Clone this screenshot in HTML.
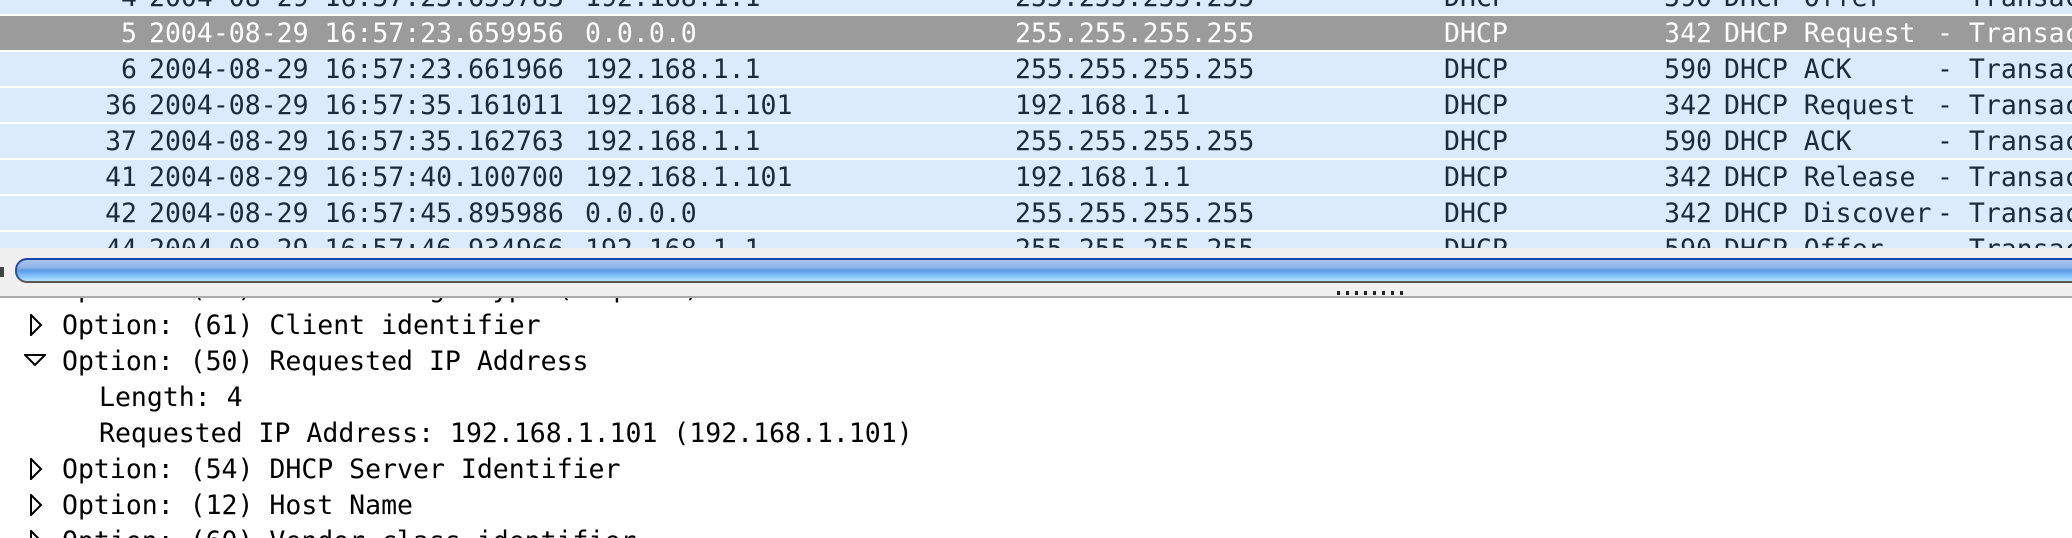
<!DOCTYPE html>
<html><head><meta charset="utf-8"><style>
*{margin:0;padding:0;box-sizing:border-box}
body{width:2072px;height:538px;overflow:hidden;background:#fff;font-family:"DejaVu Sans Mono","Liberation Mono",monospace;font-size:26.5px;position:relative}
.tbl{position:absolute;left:0;top:0;width:2072px;height:248px;overflow:hidden;background:#fff}
.row{position:absolute;left:0;width:2072px;height:34px;background:#dbebfc;color:#1c2b3a;white-space:pre}
.row.sel{background:#9b9b9b;color:#fff}
.row span{position:absolute;top:1px;line-height:34px}
.num{right:1935px;text-align:right}
.len{right:360px;text-align:right}
.gray{position:absolute;left:0;top:248px;width:2072px;height:48px;background:#f0f0f0}
.bar{position:absolute;left:15px;top:258px;width:2072px;height:25px;border-radius:12px 0 0 12px;border-top:2px solid #1a45a8;border-bottom:2px solid #555;border-left:2px solid #2050b0;background:linear-gradient(#a9c4ec 0%,#8eb4e8 35%,#5a9ae6 50%,#8ac8fb 80%,#b5e3ff 100%)}
.line{position:absolute;left:0;top:296px;width:2072px;height:2px;background:#aaa}
.tree{position:absolute;left:0;top:298px;width:2072px;height:240px;overflow:hidden;color:#000;white-space:pre}
.tr{position:absolute;line-height:36px;height:36px}
svg{position:absolute}
</style></head><body>
<div class="tbl">
<div class="row" style="top:-20px"><span class="num">4</span><span style="left:149px">2004-08-29 16:57:23.659783</span><span style="left:585px">192.168.1.1</span><span style="left:1015px">255.255.255.255</span><span style="left:1444px">DHCP</span><span class="len">590</span><span style="left:1724px">DHCP Offer</span><span style="left:1937px">- Transaction</span></div>
<div class="row sel" style="top:16px"><span class="num">5</span><span style="left:149px">2004-08-29 16:57:23.659956</span><span style="left:585px">0.0.0.0</span><span style="left:1015px">255.255.255.255</span><span style="left:1444px">DHCP</span><span class="len">342</span><span style="left:1724px">DHCP Request</span><span style="left:1937px">- Transaction</span></div>
<div class="row" style="top:52px"><span class="num">6</span><span style="left:149px">2004-08-29 16:57:23.661966</span><span style="left:585px">192.168.1.1</span><span style="left:1015px">255.255.255.255</span><span style="left:1444px">DHCP</span><span class="len">590</span><span style="left:1724px">DHCP ACK</span><span style="left:1937px">- Transaction</span></div>
<div class="row" style="top:88px"><span class="num">36</span><span style="left:149px">2004-08-29 16:57:35.161011</span><span style="left:585px">192.168.1.101</span><span style="left:1015px">192.168.1.1</span><span style="left:1444px">DHCP</span><span class="len">342</span><span style="left:1724px">DHCP Request</span><span style="left:1937px">- Transaction</span></div>
<div class="row" style="top:124px"><span class="num">37</span><span style="left:149px">2004-08-29 16:57:35.162763</span><span style="left:585px">192.168.1.1</span><span style="left:1015px">255.255.255.255</span><span style="left:1444px">DHCP</span><span class="len">590</span><span style="left:1724px">DHCP ACK</span><span style="left:1937px">- Transaction</span></div>
<div class="row" style="top:160px"><span class="num">41</span><span style="left:149px">2004-08-29 16:57:40.100700</span><span style="left:585px">192.168.1.101</span><span style="left:1015px">192.168.1.1</span><span style="left:1444px">DHCP</span><span class="len">342</span><span style="left:1724px">DHCP Release</span><span style="left:1937px">- Transaction</span></div>
<div class="row" style="top:196px"><span class="num">42</span><span style="left:149px">2004-08-29 16:57:45.895986</span><span style="left:585px">0.0.0.0</span><span style="left:1015px">255.255.255.255</span><span style="left:1444px">DHCP</span><span class="len">342</span><span style="left:1724px">DHCP Discover</span><span style="left:1937px">- Transaction</span></div>
<div class="row" style="top:232px"><span class="num">44</span><span style="left:149px">2004-08-29 16:57:46.934966</span><span style="left:585px">192.168.1.1</span><span style="left:1015px">255.255.255.255</span><span style="left:1444px">DHCP</span><span class="len">590</span><span style="left:1724px">DHCP Offer</span><span style="left:1937px">- Transaction</span></div>
</div>
<div class="gray"></div>
<div style="position:absolute;left:0;top:267px;width:4px;height:10px;background:#444"></div>
<div class="bar"></div>
<div style="position:absolute;left:1337px;top:291px;width:66px;height:4px;background:repeating-linear-gradient(90deg,#222 0 3px,transparent 3px 9px)"></div>
<div class="line"></div>
<div class="tree">
<div class="tr" style="left:62px;top:-27px">Option: (53) DHCP Message Type (Request)</div>
<svg style="left:29px;top:16px" width="14" height="22"><path d="M2 1 L12 11 L2 21 Z" fill="none" stroke="#000" stroke-width="2"/></svg>
<div class="tr" style="left:62px;top:10px">Option: (61) Client identifier</div>
<svg style="left:24px;top:55px" width="22" height="14"><path d="M1 2 L21 2 L11 12 Z" fill="none" stroke="#000" stroke-width="2"/></svg>
<div class="tr" style="left:62px;top:46px">Option: (50) Requested IP Address</div>
<div class="tr" style="left:99px;top:82px">Length: 4</div>
<div class="tr" style="left:99px;top:118px">Requested IP Address: 192.168.1.101 (192.168.1.101)</div>
<svg style="left:29px;top:160px" width="14" height="22"><path d="M2 1 L12 11 L2 21 Z" fill="none" stroke="#000" stroke-width="2"/></svg>
<div class="tr" style="left:62px;top:154px">Option: (54) DHCP Server Identifier</div>
<svg style="left:29px;top:196px" width="14" height="22"><path d="M2 1 L12 11 L2 21 Z" fill="none" stroke="#000" stroke-width="2"/></svg>
<div class="tr" style="left:62px;top:190px">Option: (12) Host Name</div>
<svg style="left:29px;top:232px" width="14" height="22"><path d="M2 1 L12 11 L2 21 Z" fill="none" stroke="#000" stroke-width="2"/></svg>
<div class="tr" style="left:62px;top:226px">Option: (60) Vendor class identifier</div>
</div>
</body></html>
